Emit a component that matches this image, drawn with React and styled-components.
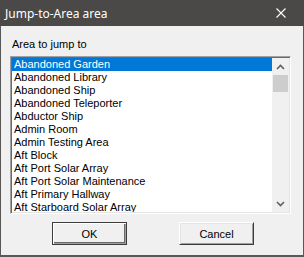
import React, { useState } from "react";
import styled, { createGlobalStyle } from "styled-components";

const areas = [
  "Abandoned Garden",
  "Abandoned Library",
  "Abandoned Ship",
  "Abandoned Teleporter",
  "Abductor Ship",
  "Admin Room",
  "Admin Testing Area",
  "Aft Block",
  "Aft Port Solar Array",
  "Aft Port Solar Maintenance",
  "Aft Primary Hallway",
  "Aft Starboard Solar Array",
];

const Global = createGlobalStyle`
  body {
    margin: 0;
    background: #f0f0f0;
  }
`;

const Window = styled.div`
  box-sizing: border-box;
  width: 304px;
  height: 257px;
  display: flex;
  flex-direction: column;
  background: #f0f0f0;
  border: 1px solid #585856;
  border-top: none;
  border-bottom-width: 2px;
  font-family: "Liberation Sans", Arial, sans-serif;
  font-size: 11px;
  color: #000;
`;

const TitleBar = styled.div`
  height: 26px;
  margin: 0 -1px;
  padding: 0 0 0 5px;
  display: flex;
  align-items: center;
  justify-content: space-between;
  background: #4a4947;
  color: #fff;
  font-family: "Noto Sans", "Open Sans", sans-serif;
  font-size: 12px;
`;

const CloseBox = styled.div`
  width: 46px;
  height: 26px;
  display: flex;
  align-items: center;
  justify-content: center;
`;

const Body = styled.div`
  flex: 1;
  display: flex;
  flex-direction: column;
  padding: 12px 12px 0 9px;
`;

const Label = styled.div`
  height: 13px;
  line-height: 13px;
  padding-left: 2px;
  margin-bottom: 5px;
`;

const ListBox = styled.div`
  box-sizing: border-box;
  height: 158px;
  display: flex;
  border-top: 1px solid #a0a0a0;
  border-left: 1px solid #a0a0a0;
  border-right: 1px solid #fff;
  border-bottom: 1px solid #fff;
  box-shadow: inset 1px 1px 0 #696969, inset -1px -1px 0 #e3e3e3;
  padding: 1px;
  background: #fff;
`;

const Items = styled.div`
  flex: 1;
  overflow: hidden;
  background: #fff;
`;

const Item = styled.div`
  height: 13px;
  line-height: 13px;
  padding-left: 2px;
  white-space: nowrap;
  background: ${(p) => (p.$selected ? "#0078d7" : "transparent")};
  color: ${(p) => (p.$selected ? "#fff" : "#000")};
`;

const ScrollBar = styled.div`
  width: 17px;
  display: flex;
  flex-direction: column;
  background: #f0f0f0;
`;

const ArrowBox = styled.div`
  height: 17px;
  display: flex;
  align-items: center;
  justify-content: center;
`;

const Thumb = styled.div`
  height: 17px;
  margin: 0 1px;
  background: #cdcdcd;
`;

const Track = styled.div`
  flex: 1;
`;

const Buttons = styled.div`
  display: flex;
  justify-content: center;
  gap: 52px;
  margin-top: 8px;
  padding-left: 5px;
`;

const Button = styled.button`
  box-sizing: border-box;
  width: 75px;
  height: 23px;
  padding: 0;
  font-family: "Liberation Sans", Arial, sans-serif;
  font-size: 11px;
  color: #000;
  background: #f0f0f0;
  border: 1px solid ${(p) => (p.$default ? "#3c3c3c" : "#f0f0f0")};
  border-right-color: #3c3c3c;
  border-bottom-color: #3c3c3c;
  border-top-color: ${(p) => (p.$default ? "#3c3c3c" : "#fff")};
  border-left-color: ${(p) => (p.$default ? "#3c3c3c" : "#fff")};
  box-shadow: ${(p) =>
    p.$default
      ? "inset 1px 1px 0 #fff, inset -1px -1px 0 #a0a0a0, inset -2px -2px 0 #696969"
      : "inset 1px 1px 0 #e3e3e3, inset -1px -1px 0 #a0a0a0"};
`;

const Chevron = ({ up }) => (
  <svg width="9" height="6" viewBox="0 0 9 6">
    <path
      d={up ? "M1 5 L4.5 1.5 L8 5" : "M1 1 L4.5 4.5 L8 1"}
      fill="none"
      stroke="#606060"
      strokeWidth="1.6"
    />
  </svg>
);

export default function App() {
  const [selected, setSelected] = useState(0);
  return (
    <>
      <Global />
      <Window>
        <TitleBar>
          <span>Jump-to-Area area</span>
          <CloseBox>
            <svg width="10" height="10" viewBox="0 0 10 10">
              <path d="M0.5 0.5 L9.5 9.5 M9.5 0.5 L0.5 9.5" stroke="#fff" strokeWidth="1.1" />
            </svg>
          </CloseBox>
        </TitleBar>
        <Body>
          <Label>Area to jump to</Label>
          <ListBox>
            <Items>
              {areas.map((a, i) => (
                <Item key={a} $selected={i === selected} onClick={() => setSelected(i)}>
                  {a}
                </Item>
              ))}
            </Items>
            <ScrollBar>
              <ArrowBox>
                <Chevron up />
              </ArrowBox>
              <Thumb />
              <Track />
              <ArrowBox>
                <Chevron />
              </ArrowBox>
            </ScrollBar>
          </ListBox>
          <Buttons>
            <Button $default>OK</Button>
            <Button>Cancel</Button>
          </Buttons>
        </Body>
      </Window>
    </>
  );
}
